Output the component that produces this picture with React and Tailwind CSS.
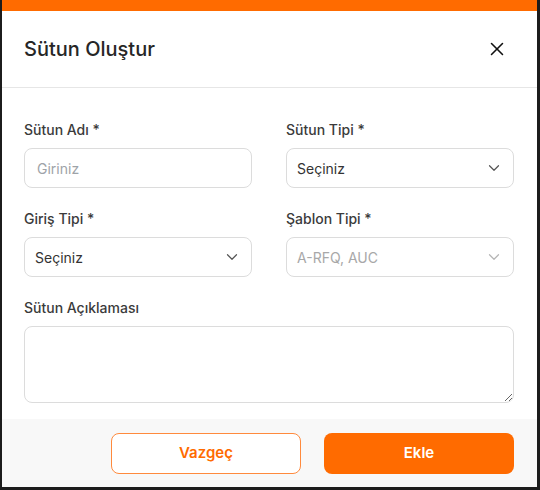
import { X, ChevronDown } from "lucide-react";

function Label({ children }) {
  return (
    <label className="mb-2 block text-[14px] font-medium leading-5 text-[#3b3b3b]">
      {children}
    </label>
  );
}

function SelectBox({ value, disabled }) {
  return (
    <div className="flex h-10 items-center justify-between rounded-lg border border-[#dcdcdc] bg-white pl-[10px] pr-[10px]">
      <span className={disabled ? "text-[14px] text-[#a8a8a8]" : "text-[14px] text-[#333]"}>
        {value}
      </span>
      <ChevronDown
        size={18}
        strokeWidth={1.6}
        className={disabled ? "text-[#b5b5b5]" : "text-[#555]"}
      />
    </div>
  );
}

export default function App() {
  return (
    <div
      className="h-[490px] w-[540px] border-b-[3px] border-l-2 border-r-[3px] border-[#1c1c1c] bg-white"
      style={{ fontFamily: "Inter, 'Noto Sans', sans-serif" }}
    >
      <div className="flex h-full flex-col border-t-[11px] border-[#ff6b00]">
        <div className="flex h-[77px] items-center justify-between border-b border-[#e6e6e6] pl-[22px] pr-[29px]">
          <h2 className="text-[20px] font-medium text-[#262626]">Sütun Oluştur</h2>
          <X size={22} strokeWidth={1.7} className="text-[#111]" />
        </div>

        <div className="ml-[22px] w-[490px] pt-[32px]">
          <div className="grid grid-cols-2 gap-x-[34px] gap-y-[21px]">
            <div>
              <Label>Sütun Adı *</Label>
              <div className="flex h-10 items-center rounded-lg border border-[#dcdcdc] px-3 text-[14px] text-[#9ea3a8]">
                Giriniz
              </div>
            </div>
            <div>
              <Label>Sütun Tipi *</Label>
              <SelectBox value="Seçiniz" />
            </div>
            <div>
              <Label>Giriş Tipi *</Label>
              <SelectBox value="Seçiniz" />
            </div>
            <div>
              <Label>Şablon Tipi *</Label>
              <SelectBox value="A-RFQ, AUC" disabled />
            </div>
          </div>

          <div className="mt-[21px]">
            <Label>Sütun Açıklaması</Label>
            <textarea className="block h-[77px] w-full resize-y rounded-lg border border-[#dcdcdc] px-3 py-2 text-[14px] outline-none" />
          </div>
        </div>

        <div className="mt-4 flex flex-1 items-center justify-end gap-[23px] bg-[#f8f8f8] pr-[23px]">
          <button className="h-[41px] w-[190px] rounded-lg border border-[#ff8a3d] bg-white text-[15px] font-semibold text-[#ff6b00]">
            Vazgeç
          </button>
          <button className="h-[41px] w-[190px] rounded-lg bg-[#ff6b00] text-[15px] font-semibold text-white">
            Ekle
          </button>
        </div>
      </div>
    </div>
  );
}
